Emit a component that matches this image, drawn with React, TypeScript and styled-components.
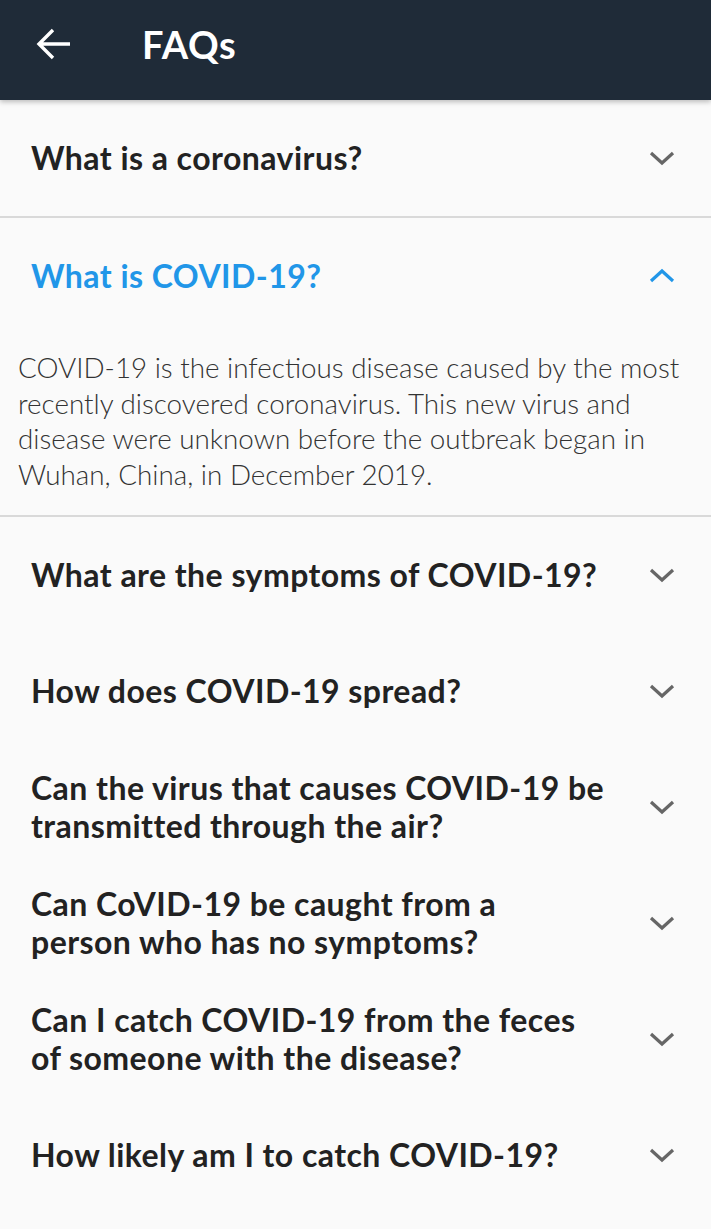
import React from "react";
import styled, { createGlobalStyle } from "styled-components";

const Global = createGlobalStyle`
  html, body { margin: 0; padding: 0; background: #fafafa; }
  * { box-sizing: border-box; }
`;

const Page = styled.div`
  width: 711px;
  min-height: 1229px;
  background: #fafafa;
  font-family: Lato, "Open Sans", sans-serif;
`;

const Header = styled.header`
  height: 100px;
  background: #1f2b38;
  display: flex;
  align-items: center;
  padding: 0 0 12px 36px;
  gap: 70px;
  box-shadow: 0 2px 5px rgba(0, 0, 0, 0.25);
  position: relative;
  z-index: 1;
`;

const Title = styled.h1`
  margin: 0;
  color: #fff;
  font-size: 38px;
  line-height: 44px;
  font-weight: 700;
  letter-spacing: 0.6px;
`;

const List = styled.div`
  display: flex;
  flex-direction: column;
`;

const Item = styled.div<{ $divider?: boolean }>`
  border-bottom: ${(p) => (p.$divider ? "2px solid #d9d9d9" : "none")};
`;

const QuestionRow = styled.div`
  height: 116px;
  display: flex;
  align-items: center;
  justify-content: space-between;
  padding: 0 36px 0 31px;
`;

const Question = styled.div<{ $open?: boolean }>`
  max-width: 600px;
  font-size: 32px;
  line-height: 38px;
  font-weight: 700;
  letter-spacing: 0.45px;
  white-space: pre-line;
  color: ${(p) => (p.$open ? "#2196e8" : "#222")};
`;

const Answer = styled.p`
  margin: 0;
  padding: 16px 18px 22px 18px;
  font-size: 27.8px;
  line-height: 35.7px;
  font-weight: 300;
  color: #333;
`;

const Chevron = ({ open }: { open?: boolean }) => (
  <svg width="26" height="16" viewBox="0 0 26 16" style={{ flexShrink: 0 }}>
    <path
      d={open ? "M2 13 L13 3 L24 13" : "M2 3 L13 13 L24 3"}
      fill="none"
      stroke={open ? "#2196e8" : "#666"}
      strokeWidth="3.2"
    />
  </svg>
);

const BackArrow = () => (
  <svg width="36" height="34" viewBox="0 0 36 34">
    <path d="M34 17 H4 M17 3 L3 17 L17 31" fill="none" stroke="#fff" strokeWidth="3.4" />
  </svg>
);

const faqs = [
  { q: "What is a coronavirus?", divider: true },
  {
    q: "What is COVID-19?",
    open: true,
    divider: true,
    a: "COVID-19 is the infectious disease caused by the most recently discovered coronavirus. This new virus and disease were unknown before the outbreak began in Wuhan, China, in December 2019.",
  },
  { q: "What are the symptoms of COVID-19?" },
  { q: "How does COVID-19 spread?" },
  { q: "Can the virus that causes COVID-19 be\ntransmitted through the air?" },
  { q: "Can CoVID-19 be caught from a\nperson who has no symptoms?" },
  { q: "Can I catch COVID-19 from the feces\nof someone with the disease?" },
  { q: "How likely am I to catch COVID-19?" },
];

export default function App() {
  return (
    <Page>
      <Global />
      <Header>
        <BackArrow />
        <Title>FAQs</Title>
      </Header>
      <List>
        {faqs.map((f) => (
          <Item key={f.q} $divider={f.divider}>
            <QuestionRow>
              <Question $open={f.open}>{f.q}</Question>
              <Chevron open={f.open} />
            </QuestionRow>
            {f.a && <Answer>{f.a}</Answer>}
          </Item>
        ))}
      </List>
    </Page>
  );
}
